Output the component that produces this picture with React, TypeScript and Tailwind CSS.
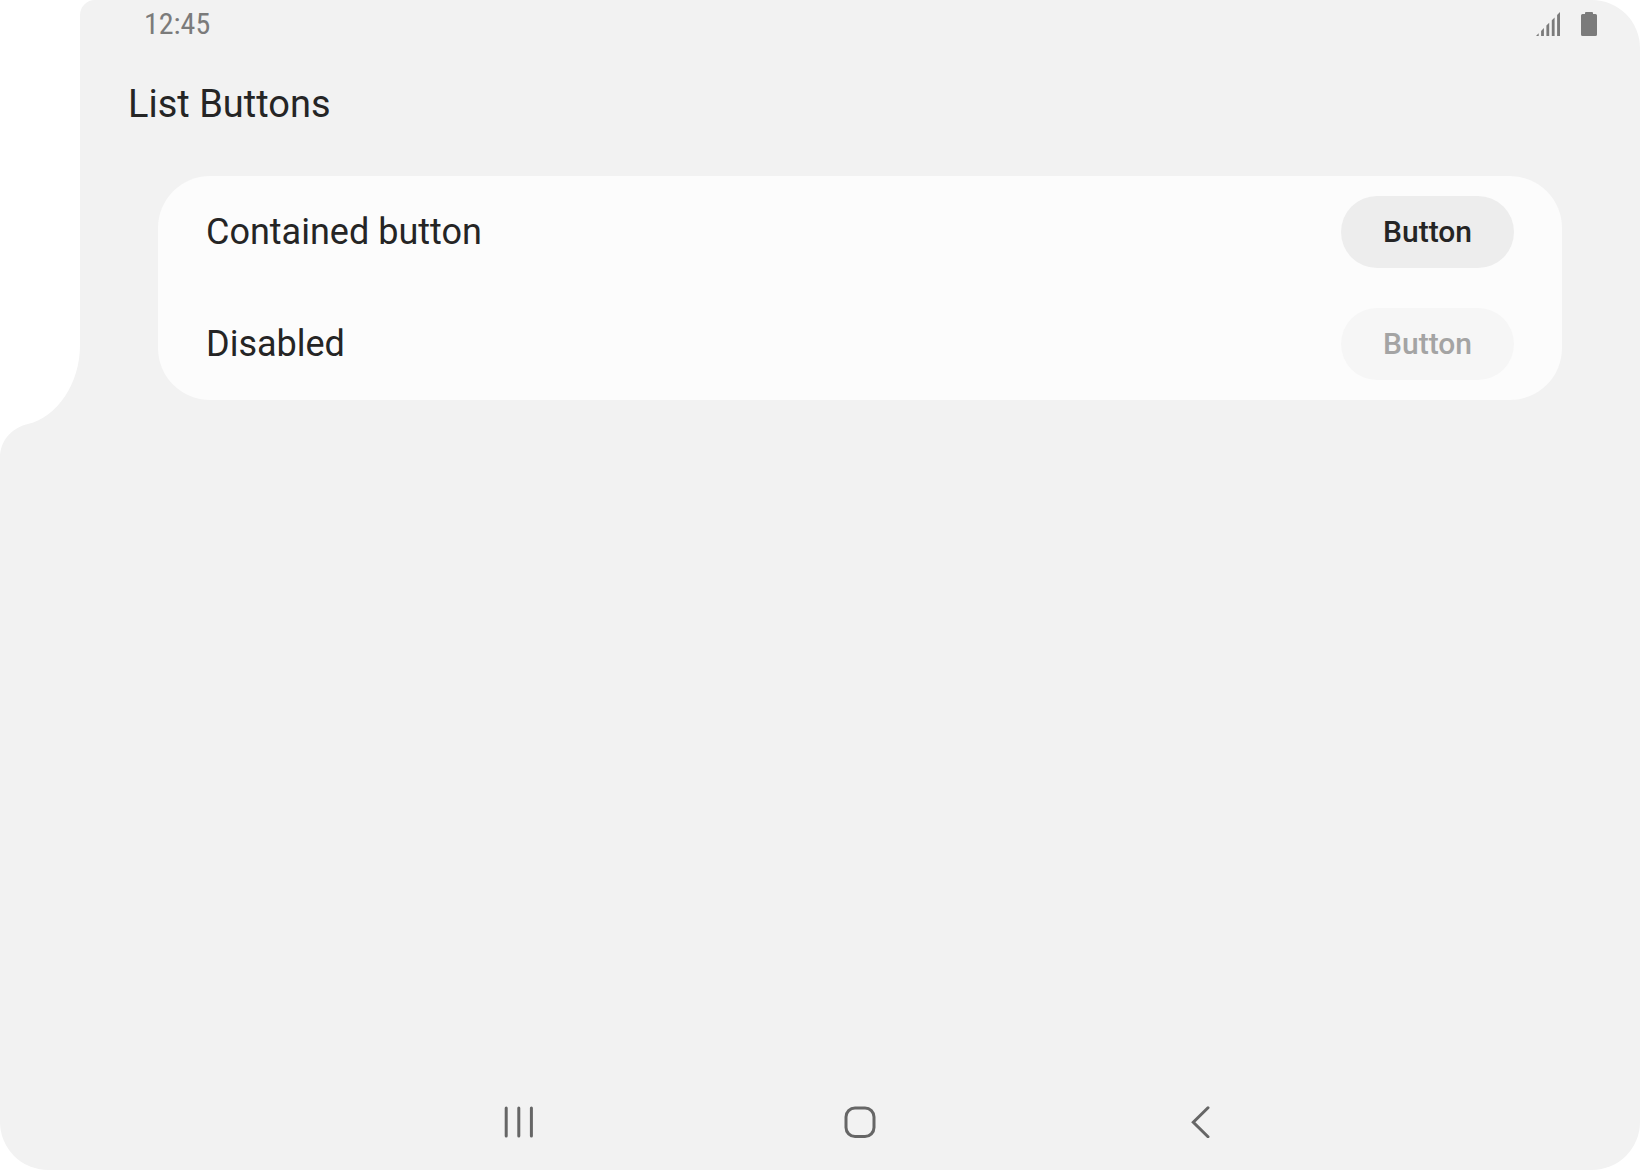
import React from "react";

type ListItem = { id: string; label: string; disabled: boolean };

const items: ListItem[] = [
  { id: "contained", label: "Contained button", disabled: false },
  { id: "disabled", label: "Disabled", disabled: true },
];

function CameraCutout() {
  return (
    <svg
      className="absolute left-0 top-0 text-white"
      width="96"
      height="464"
      viewBox="0 0 96 464"
      fill="currentColor"
      aria-hidden="true"
    >
      <path d="M0 0H95A15 15 0 0 0 80 15V345C80 384 57 417 28 424C12 428 0 440 0 458Z" />
    </svg>
  );
}

function SignalIcon() {
  return (
    <svg width="24" height="24" viewBox="0 0 24 24" fill="currentColor" role="img" aria-label="Signal">
      <path d="M0 24L2.7 21.3V24ZM5.1 18.9L7.9 16.1V24H5.1ZM10.4 13.6L13.2 10.8V24H10.4ZM15.8 8.2L18.6 5.4V24H15.8ZM21.1 2.9L24 0V24H21.1Z" />
    </svg>
  );
}

function BatteryIcon() {
  return (
    <svg width="16" height="24" viewBox="0 0 16 24" fill="currentColor" role="img" aria-label="Battery">
      <path d="M5 0H11Q12 0 12 1V2H14.5Q16 2 16 3.5V22.5Q16 24 14.5 24H1.5Q0 24 0 22.5V3.5Q0 2 1.5 2H4V1Q4 0 5 0Z" />
    </svg>
  );
}

function StatusBar() {
  return (
    <header className="flex h-12 items-center justify-between pl-16 pr-[43px] text-[#7b7b7b]">
      <time className="font-['Roboto_Condensed',Roboto,sans-serif] text-[30px] leading-9">12:45</time>
      <div className="flex items-center gap-[21px]">
        <SignalIcon />
        <BatteryIcon />
      </div>
    </header>
  );
}

function ListRow({ item }: { item: ListItem }) {
  return (
    <li className="flex h-28 items-center justify-between px-12">
      <span id={item.id} className="text-4xl">
        {item.label}
      </span>
      <button
        type="button"
        disabled={item.disabled}
        aria-describedby={item.id}
        className="h-18 rounded-full bg-[#ededed] px-[42px] text-[30px] font-medium leading-9 disabled:bg-[#f6f6f6] disabled:text-[#a4a4a4]"
      >
        Button
      </button>
    </li>
  );
}

function NavigationBar() {
  return (
    <nav
      aria-label="System"
      className="mx-auto grid h-24 w-full max-w-5xl grid-cols-3 place-items-center text-[#666666]"
    >
      <button type="button" aria-label="Recent apps" className="p-4">
        <svg width="32" height="32" viewBox="0 0 32 32" fill="none" stroke="currentColor" strokeWidth="3" strokeLinecap="round">
          <path d="M3.2 2V30M15.8 2V30M28.4 2V30" />
        </svg>
      </button>
      <button type="button" aria-label="Home" className="p-4">
        <svg width="32" height="32" viewBox="0 0 32 32" fill="none" stroke="currentColor" strokeWidth="3">
          <rect x="2" y="2" width="28" height="28.5" rx="9" />
        </svg>
      </button>
      <button type="button" aria-label="Back" className="p-4">
        <svg width="32" height="32" viewBox="0 0 32 32" fill="none" stroke="currentColor" strokeWidth="3" strokeLinecap="round" strokeLinejoin="miter">
          <path d="M23 1.8L8.3 16.3L23 30.8" />
        </svg>
      </button>
    </nav>
  );
}

export default function App() {
  return (
    <div className="min-h-screen bg-white">
      <div className="relative flex min-h-screen flex-col rounded-[48px] bg-[#f2f2f2] pl-20 font-[Roboto,sans-serif] text-[#252525]">
        <CameraCutout />
        <StatusBar />
        <h1 className="flex h-32 items-center px-12 pb-4 text-[38px] leading-[48px]">List Buttons</h1>
        <main className="grow px-[78px]">
          <ul className="rounded-[52px] bg-[#fcfcfc]">
            {items.map((item) => (
              <ListRow key={item.id} item={item} />
            ))}
          </ul>
        </main>
        <NavigationBar />
      </div>
    </div>
  );
}
